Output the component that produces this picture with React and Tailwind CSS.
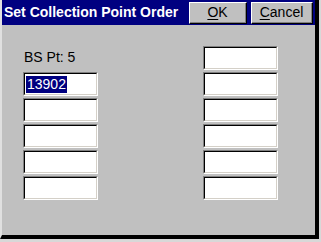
import React from "react";

const Field = ({ value }) => (
  <div className="w-[75px] h-[24px] border-t border-l border-t-[#808080] border-l-[#808080] border-b border-r border-b-white border-r-white">
    <div className="w-full h-full border-t border-l border-t-black border-l-black border-b border-r border-b-[#d4d0c8] border-r-[#d4d0c8] bg-white flex items-center px-[1px]">
      {value && (
        <span className="bg-[#000080] text-white text-[14px] leading-[17px] px-[1px]">{value}</span>
      )}
    </div>
  </div>
);

const WinButton = ({ hot, rest, width }) => (
  <button
    className={`${width} h-[22px] bg-[#c0c0c0] border-t border-l border-t-white border-l-white border-b border-r border-b-black border-r-black`}
  >
    <div className="w-full h-full border-b border-r border-b-[#808080] border-r-[#808080] flex items-center justify-center text-[14px] text-black">
      <span className="underline underline-offset-2">{hot}</span>
      {rest}
    </div>
  </button>
);

export default function App() {
  return (
    <div
      className="w-[321px] h-[242px] bg-[#d8d8d8] overflow-hidden"
      style={{ fontFamily: '"Liberation Sans", Arial, sans-serif' }}
    >
      {/* dialog window */}
      <div className="w-[319px] h-[239px] bg-[#c0c0c0] border-l-2 border-l-[#e0e0e0] border-b-[4px] border-b-black border-r-[4px] border-r-black flex flex-col">
        {/* title bar */}
        <div className="h-[25px] bg-[#000080] flex items-center pl-[2px] pr-[2px]">
          <span className="text-white font-bold text-[14px] whitespace-nowrap flex-1">Set Collection Point Order</span>
          <div className="flex gap-[4px] shrink-0">
            <WinButton hot="O" rest="K" width="w-[58px]" />
            <WinButton hot="C" rest="ancel" width="w-[62px]" />
          </div>
        </div>

        {/* body */}
        <div className="flex pt-[21px] pl-[21px]">
          <div className="flex flex-col gap-[2px] w-[180px]">
            <div className="h-[24px] text-[14px] text-black leading-[16px] pt-[3px] pl-[1px]">BS Pt: 5</div>
            <Field value="13902" />
            <Field />
            <Field />
            <Field />
            <Field />
          </div>
          <div className="flex flex-col gap-[2px]">
            <Field />
            <Field />
            <Field />
            <Field />
            <Field />
            <Field />
          </div>
        </div>
      </div>
    </div>
  );
}
